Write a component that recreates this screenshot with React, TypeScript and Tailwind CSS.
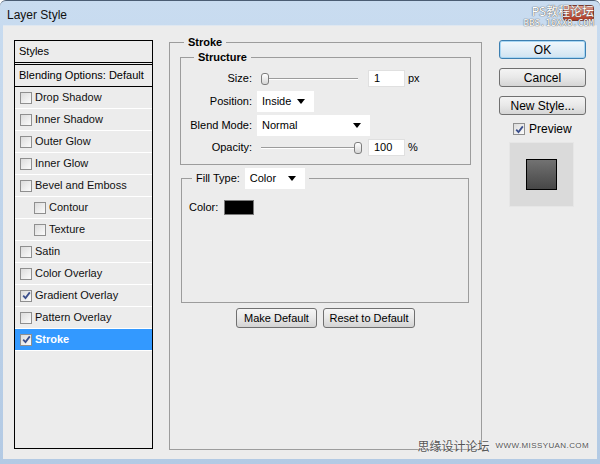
function Check({ checked = false, className = "" }: { checked?: boolean; className?: string }) {
  return (
    <span
      className={`flex h-[12px] w-[12px] shrink-0 items-center justify-center border border-[#8f8f8f] bg-linear-to-br from-[#dcdcdc] to-[#fbfbfb] ${className}`}
    >
      {checked && (
        <svg width="9" height="9" viewBox="0 0 9 9">
          <path d="M1.2 4.6 L3.5 7 L7.8 1.4" fill="none" stroke="#3b4f8c" strokeWidth="1.8" />
        </svg>
      )}
    </span>
  );
}

function StyleRow({
  label,
  checked = false,
  indent = false,
  active = false,
}: {
  label: string;
  checked?: boolean;
  indent?: boolean;
  active?: boolean;
}) {
  return (
    <div
      className={`flex h-[22px] items-center gap-[3px] border-b border-white ${indent ? "pl-[19px]" : "pl-[5px]"} ${
        active ? "bg-[#3399ff] font-bold text-white" : "text-[#111]"
      }`}
    >
      <Check checked={checked} className={active ? "bg-white" : ""} />
      <span>{label}</span>
    </div>
  );
}

function Slider({ value }: { value: "min" | "max" }) {
  return (
    <div className="relative h-[14px] w-[104px]">
      {/* Track */}
      <div className="absolute left-[4px] right-[3px] top-[6px] h-[2px] border-t border-[#9c9c9c] bg-white" />
      {/* Thumb */}
      <div
        className={`absolute top-[1px] h-[12px] w-[8px] rounded-[3px] border border-[#7d7d7d] bg-linear-to-b from-white to-[#d6d6d6] ${
          value === "min" ? "left-[4px]" : "left-[97px]"
        }`}
      />
    </div>
  );
}

function NumberBox({ value }: { value: string }) {
  return (
    <div className="flex h-[17px] w-[37px] items-center border border-[#e0e0e0] bg-white pl-[5px] text-[11px]">
      {value}
    </div>
  );
}

function Select({ label, width }: { label: string; width: string }) {
  return (
    <div className={`flex h-[21px] items-center justify-between bg-white pl-[5px] pr-[9px] text-[11px] ${width}`}>
      <span>{label}</span>
      <svg width="8" height="5" viewBox="0 0 8 5">
        <path d="M0 0 H8 L4 5 Z" fill="#000" />
      </svg>
    </div>
  );
}

function PsButton({ children, width }: { children: React.ReactNode; width: string }) {
  return (
    <div
      className={`flex h-[20px] items-center justify-center rounded-[3px] border border-[#707070] bg-linear-to-b from-[#f6f6f6] via-[#e8e8e8] to-[#d3d3d3] text-[11px] ${width}`}
    >
      {children}
    </div>
  );
}

function WinButton({ children, primary = false }: { children: React.ReactNode; primary?: boolean }) {
  return (
    <div
      className={`flex h-[19px] w-[87px] items-center justify-center rounded-[3px] border bg-linear-to-b text-[12px] ${
        primary
          ? "border-[#3c7fb1] from-[#f0f8fd] via-[#e2eef7] to-[#cfe3f1] shadow-[inset_0_0_0_1px_#a8d6f3]"
          : "border-[#707070] from-[#f4f4f4] via-[#e8e8e8] to-[#d5d5d5]"
      }`}
    >
      {children}
    </div>
  );
}

export default function App() {
  const rows = [
    { label: "Drop Shadow" },
    { label: "Inner Shadow" },
    { label: "Outer Glow" },
    { label: "Inner Glow" },
    { label: "Bevel and Emboss" },
    { label: "Contour", indent: true },
    { label: "Texture", indent: true },
    { label: "Satin" },
    { label: "Color Overlay" },
    { label: "Gradient Overlay", checked: true },
    { label: "Pattern Overlay" },
    { label: "Stroke", checked: true, active: true },
  ];

  return (
    <div className="relative flex h-[464px] w-[600px] flex-col overflow-hidden rounded-t-[6px] border-t border-[#4b5d73] bg-linear-to-b from-[#c9dcf0] to-[#b3cae4] font-['Liberation_Sans',Arial,sans-serif] text-[11px] text-black">
      {/* Title bar */}
      <div className="flex h-[24px] shrink-0 items-center justify-between pl-[7px] pr-[6px] pt-[3px]">
        <span className="text-[12px] text-[#111]">Layer Style</span>
        <div className="mb-[4px] h-[16px] w-[31px] rounded-[3px] border border-[#7a3a30] bg-linear-to-b from-[#e5a395] via-[#c7604c] to-[#b03b25]" />
      </div>

      {/* Client area */}
      <div className="mx-[3px] mb-[5px] flex flex-1 border-t border-[#dfe7f0] bg-[#ececec] pl-[11px] pt-[10px]">
        {/* Styles list */}
        <div className="mt-[4px] flex h-[409px] w-[139px] flex-col border border-black">
          <div className="flex h-[24px] items-center border-b-[3px] border-double border-black pl-[4px]">Styles</div>
          <div className="flex h-[22px] items-center border-b border-black pl-[4px]">Blending Options: Default</div>
          {rows.map((row) => (
            <StyleRow key={row.label} {...row} />
          ))}
        </div>

        {/* Stroke settings */}
        <fieldset className="ml-[16px] h-[414px] w-[313px] border border-[#9c9c9c]">
          <legend className="ml-[14px] px-[4px] font-bold leading-[13px]">Stroke</legend>

          <fieldset className="mx-[10px] mt-[2px] border border-[#9c9c9c] pb-[8px] pt-[6px]">
            <legend className="ml-[13px] px-[4px] font-bold leading-[13px]">Structure</legend>
            <div className="flex flex-col gap-[3px]">
              <div className="flex items-center">
                <span className="w-[71px] text-right">Size:</span>
                <div className="ml-[5px]">
                  <Slider value="min" />
                </div>
                <div className="ml-[7px]">
                  <NumberBox value="1" />
                </div>
                <span className="ml-[3px]">px</span>
              </div>
              <div className="mt-[1px] flex items-center">
                <span className="w-[71px] text-right">Position:</span>
                <div className="ml-[5px]">
                  <Select label="Inside" width="w-[57px]" />
                </div>
              </div>
              <div className="flex items-center">
                <span className="w-[71px] text-right">Blend Mode:</span>
                <div className="ml-[5px]">
                  <Select label="Normal" width="w-[113px]" />
                </div>
              </div>
              <div className="flex items-center">
                <span className="w-[71px] text-right">Opacity:</span>
                <div className="ml-[5px]">
                  <Slider value="max" />
                </div>
                <div className="ml-[7px]">
                  <NumberBox value="100" />
                </div>
                <span className="ml-[3px]">%</span>
              </div>
            </div>
          </fieldset>

          <fieldset className="ml-[11px] mr-[12px] mt-[3px] h-[135px] border border-[#9c9c9c]">
            <legend className="ml-[10px] flex items-center gap-[5px] px-[4px]">
              <span>Fill Type:</span>
              <Select label="Color" width="w-[60px]" />
            </legend>
            <div className="mt-[10px] flex items-center gap-[6px] pl-[7px]">
              <span>Color:</span>
              <div className="h-[15px] w-[30px] border border-[#7a7a7a] bg-black" />
            </div>
          </fieldset>

          <div className="mt-[5px] flex justify-center gap-[6px]">
            <PsButton width="w-[81px]">Make Default</PsButton>
            <PsButton width="w-[92px]">Reset to Default</PsButton>
          </div>
        </fieldset>

        {/* Dialog buttons */}
        <div className="ml-[17px] mt-[4px] flex w-[87px] flex-col">
          <div className="flex flex-col gap-[9px]">
            <WinButton primary>OK</WinButton>
            <WinButton>Cancel</WinButton>
            <WinButton>New Style...</WinButton>
          </div>
          <div className="mt-[5px] flex items-center gap-[4px] pl-[14px] text-[12px]">
            <Check checked />
            <span>Preview</span>
          </div>
          <div className="ml-[10px] mt-[4px] flex h-[65px] w-[65px] items-center justify-center border border-[#e6e6e6] bg-[#dadada]">
            <div className="h-[31px] w-[31px] border border-black bg-linear-to-b from-[#727272] to-[#474747]" />
          </div>
        </div>
      </div>

      {/* Watermarks */}
      <div className="absolute right-[6px] top-[4px] flex flex-col items-end gap-[1px] text-white [text-shadow:0_0_1px_#555,0_0_1px_#555]">
        <span className="font-['Noto_Sans_CJK_SC',sans-serif] text-[12px] leading-[12px]">PS教程论坛</span>
        <span className="font-['DejaVu_Sans_Mono',monospace] text-[9px] leading-[11px]">BBS.16XX8.COM</span>
      </div>
      <div className="absolute bottom-[9px] right-[11px] flex items-center gap-[6px] text-[#555] [text-shadow:0_0_2px_#fff]">
        <span className="font-['Noto_Sans_CJK_SC',sans-serif] text-[12px]">思缘设计论坛</span>
        <span className="text-[8px] tracking-[0.4px]">WWW.MISSYUAN.COM</span>
      </div>
    </div>
  );
}
